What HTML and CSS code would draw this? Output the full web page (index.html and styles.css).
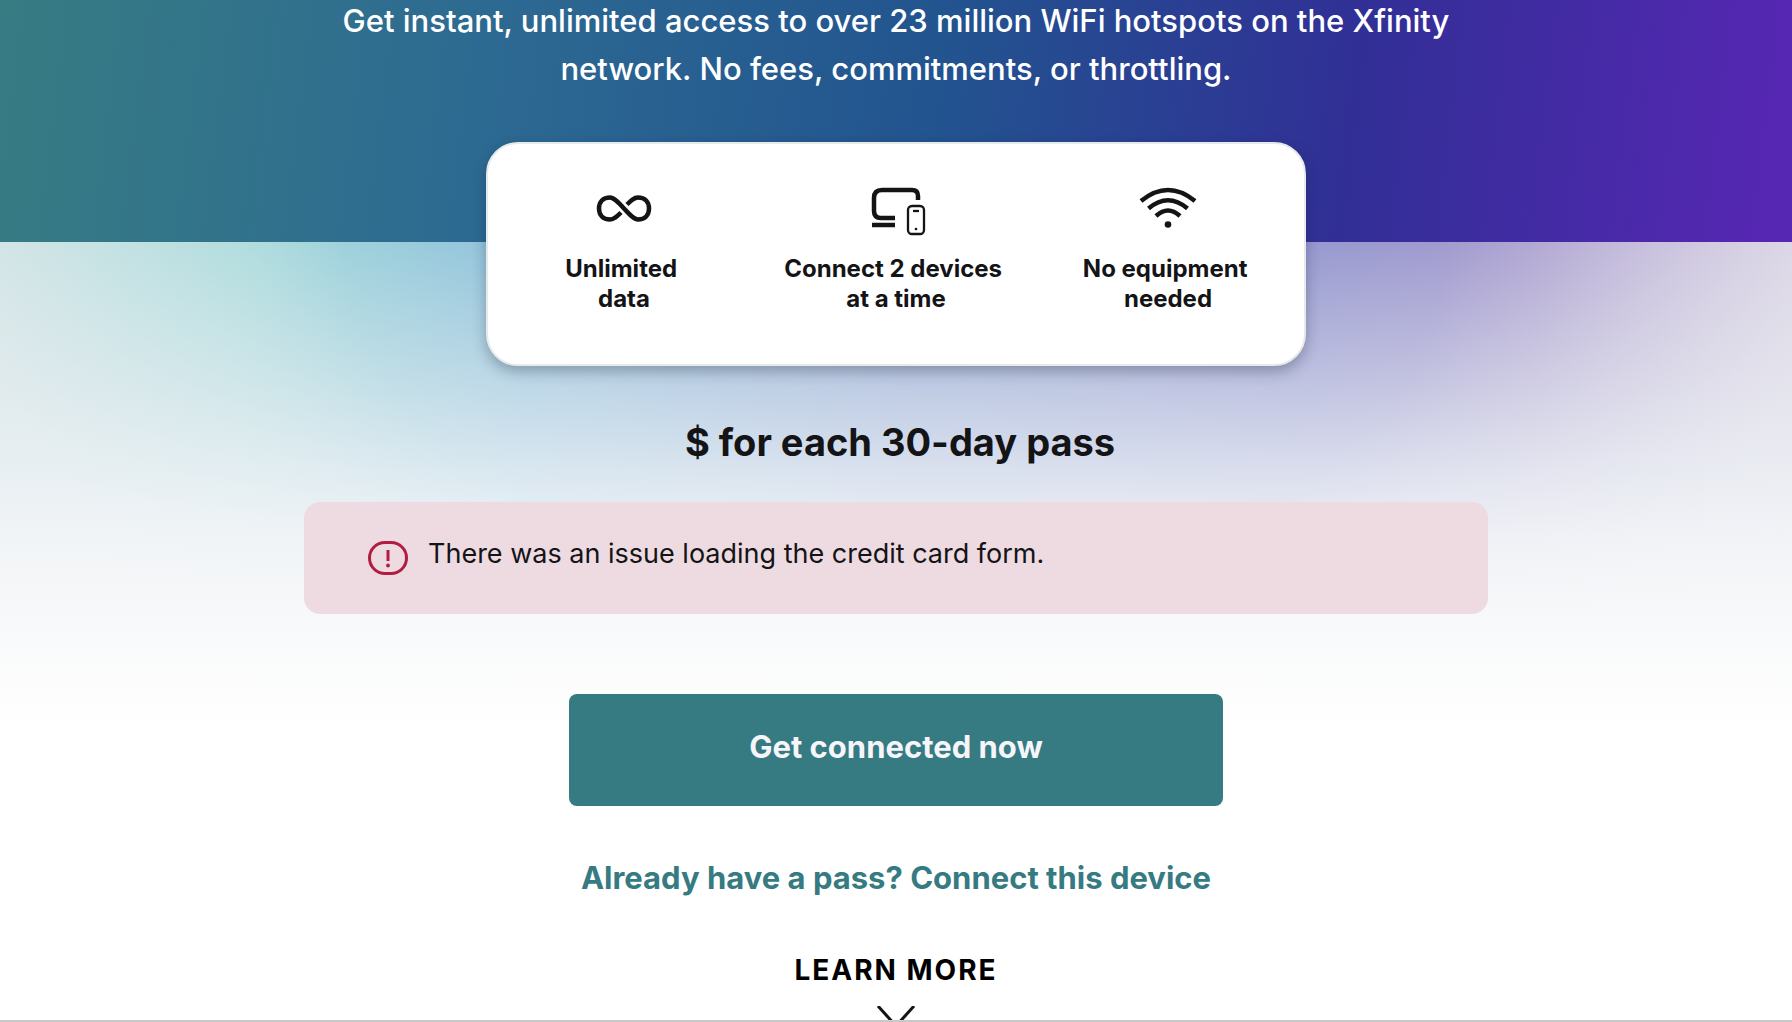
FILE: index.html
```html
<!DOCTYPE html>
<html lang="en">
<head>
<meta charset="utf-8">
<meta name="viewport" content="width=device-width, initial-scale=1">
<title>WiFi pass</title>
<link rel="stylesheet" href="styles.css">
</head>
<body>
<main class="page">
  <header class="hero">
    <p class="hero-text">Get instant, unlimited access to over 23 million WiFi hotspots on the Xfinity network. No fees, commitments, or throttling.</p>
  </header>
  <section class="offer">
    <ul class="features">
      <li class="feature">
        <svg class="icon" viewBox="0 0 64 56" aria-hidden="true"><path d="M29 28.500C25 32.500 22 35.500 18 35.500C11 35.500 7 31 7 24.500C7 18 11 13.500 18 13.500C26 13.500 38 35.500 46 35.500C53 35.500 57 31 57 24.500C57 18 53 13.500 46 13.500C42 13.500 39 16.500 35 20.500"/></svg>
        <span class="feature-label">Unlimited&nbsp;<br>data</span>
      </li>
      <li class="feature">
        <svg class="icon" viewBox="0 0 64 56" aria-hidden="true"><path d="M31 34H17Q10 34 10 27V14Q10 6 18 6H48Q54 6 54 12V16M8 41H31"/><rect class="thin" x="44" y="22" width="16" height="28" rx="4"/><path class="thin" d="M49 27H55"/><circle class="dot" cx="52" cy="45" r="1.3"/></svg>
        <span class="feature-label">Connect 2 devices&nbsp;<br>at a time</span>
      </li>
      <li class="feature">
        <svg class="icon" viewBox="0 0 64 56" aria-hidden="true"><path d="M5 17Q32-5 59 17M12.500 24.500Q32 8 51.500 24.500M20 32Q32 21 44 32"/><circle class="dot" cx="32" cy="40.500" r="3.300"/></svg>
        <span class="feature-label">No equipment&nbsp;<br>needed</span>
      </li>
    </ul>
    <h1 class="price">$ for each 30-day pass</h1>
    <div class="alert" role="alert">
      <svg class="alert-icon" viewBox="0 0 40 34" aria-hidden="true"><rect x="1.500" y="1.500" width="37" height="31" rx="15.500"/><path d="M20 9V20"/><circle cx="20" cy="24.500" r="1.900"/></svg>
      <p class="alert-text">There was an issue loading the credit card form.</p>
    </div>
    <button class="connect" type="button">Get connected now</button>
    <a class="existing" href="#connect">Already have a pass? Connect this device</a>
    <a class="more" href="#details">
      <span class="more-label">LEARN MORE</span>
      <svg class="chevron" viewBox="0 0 40 14" aria-hidden="true"><path d="M2 0L20 20L38 0"/></svg>
    </a>
  </section>
  <section class="details" id="details"></section>
</main>
</body>
</html>
```
FILE: styles.css
```css
* { box-sizing: border-box; margin: 0; padding: 0; }
body { background: #fff; color: #141417; font-family: Inter, "Liberation Sans", sans-serif; }
.hero {
  display: flex;
  flex-direction: column;
  align-items: center;
  padding: 0 304px 149px;
  height: 242px;
  justify-content: flex-end;
  text-align: center;
  color: #fff;
  background: linear-gradient(97deg, #377c83 0%, #2d6a92 27%, #22548f 52%, #312f96 75%, #5527b2 98%);
}
.hero-text { font-size: 31px; line-height: 48px; font-weight: 500; }
.offer {
  position: relative;
  display: flex;
  flex-direction: column;
  align-items: center;
  padding: 0 24px;
}
.offer::before {
  content: "";
  position: absolute;
  inset: 0 0 auto;
  height: 490px;
  z-index: -2;
  background:
    linear-gradient(180deg, rgba(238,241,245,0) 0%, rgba(236,240,244,.5) 30%, rgba(238,242,246,.78) 47%, rgba(243,245,248,.93) 60%, #f8f9fa 78%, #fff 100%),
    radial-gradient(ellipse 51% 125% at 50% 0, rgba(232,234,238,0) 60%, rgba(232,232,236,.7) 100%),
    linear-gradient(90deg, #a8dedb 0%, #a4dadb 14%, #92c2dc 29%, #93a8d4 50%, #9699d0 72%, #a79bce 86%, #c4b4da 100%);
}
.features {
  display: grid;
  grid-template-columns: repeat(3, 1fr);
  width: 100%;
  max-width: 820px;
  margin-top: -100px;
  padding: 40px 0 50px;
  list-style: none;
  background: #fff;
  border: 2px solid #e6eaea;
  border-radius: 32px;
  box-shadow: 0 6px 14px rgba(20, 30, 50, .3);
}
.feature { display: flex; flex-direction: column; align-items: center; gap: 14px; text-align: center; }
.icon { width: 64px; height: 56px; fill: none; stroke: #141417; stroke-width: 4.5; }
.icon .thin { stroke-width: 2.3; }
.icon .dot { fill: #141417; stroke: none; }
.feature-label { font-size: 24px; line-height: 30px; font-weight: 700; }
.price { margin-top: 52px; padding-left: 8px; font-size: 38px; line-height: 48px; font-weight: 700; }
.alert {
  display: flex;
  align-items: flex-start;
  gap: 20px;
  width: 100%;
  max-width: 1184px;
  margin-top: 36px;
  padding: 32px 64px 39px;
  border-radius: 16px;
  background: #eedbe1;
}
.alert-icon { width: 40px; height: 34px; margin-top: 7px; fill: none; stroke: #b01d40; stroke-width: 3; }
.alert-icon circle { fill: #b01d40; stroke: none; }
.alert-text { font-size: 27px; line-height: 40px; }
.connect {
  width: 100%;
  max-width: 654px;
  margin-top: 80px;
  padding: 29px 32px 35px;
  border: 0;
  border-radius: 8px;
  background: #367a82;
  color: #f5f5fa;
  font-family: inherit;
  font-size: 31px;
  line-height: 48px;
  font-weight: 700;
}
.existing { margin-top: 48px; font-size: 31px; line-height: 48px; font-weight: 700; color: #367a82; text-decoration: none; }
.more { display: flex; flex-direction: column; align-items: center; gap: 16px; margin-top: 48px; color: #000; text-decoration: none; }
.more-label { font-size: 28px; line-height: 40px; font-weight: 700; letter-spacing: 2px; }
.chevron { width: 40px; height: 14px; fill: none; stroke: #141417; stroke-width: 3; }
.details { border-top: 2px solid #c8c8c8; }
```
